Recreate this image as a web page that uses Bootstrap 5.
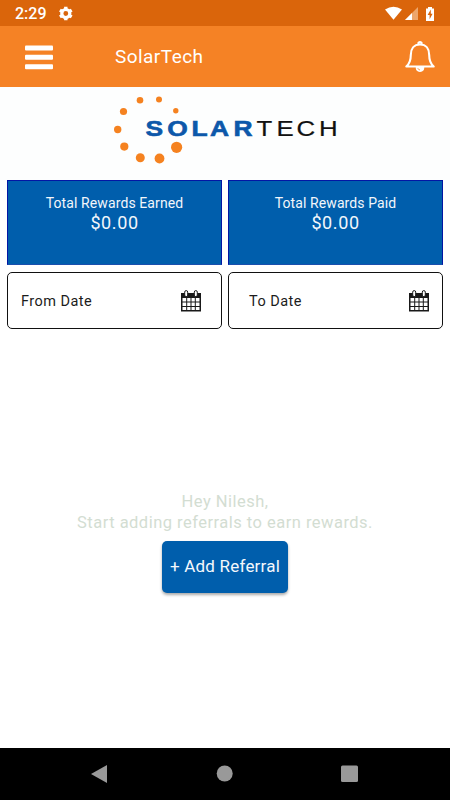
<!DOCTYPE html>
<html lang="en">
<head>
<meta charset="utf-8">
<meta name="viewport" content="width=device-width, initial-scale=1">
<title>SolarTech</title>
<link href="https://cdn.jsdelivr.net/npm/bootstrap@5.3.0/dist/css/bootstrap.min.css" rel="stylesheet">
<style>
body{font-family:Roboto,Inter,sans-serif;background:#fff;height:800px;overflow:hidden}
svg{display:block;flex:none}
.status{height:26px;background:#da650b;font:500 16px/26px Roboto,sans-serif;padding:1px 15px 0 15px}
.appbar{height:61px;background:#f58225;padding:0 15px 0 24px}
.title{font-size:19px;letter-spacing:.45px;margin-left:61px;padding-top:2px}
.logo{height:93px;background:#fdfefe}
.panels{padding:0 7px;gap:6px}
.total{height:85px;background:#005eac;border:1px solid #0216a4;border-bottom-color:#1a4fae;padding-top:12px;line-height:20px;color:#f2f6fb}
.total small{font-size:14px;letter-spacing:.1px;line-height:20px}
.total span{font-size:18px;letter-spacing:.6px;line-height:20px}
.dates{margin-top:7px}
.date{height:57px;border:1px solid #111;border-radius:5px;font-size:14.5px;color:#1c1c1c;letter-spacing:.45px;padding:2px 13px 0}
.date svg{margin-top:-2px}
.from svg{margin-right:7px}
.to{text-indent:7px}
.empty{color:#d3ddd2;font-size:16.5px;line-height:21px;letter-spacing:.48px;margin-top:162px}
.add{width:126px;height:52px;background:#005eac;border-radius:5px;font-size:17px;letter-spacing:.2px;box-shadow:0 2px 3px #0005;margin-top:8px;white-space:nowrap}
.add,.add:hover{color:#f4f8fc}
.sysnav{height:52px;background:#000}
</style>
<script src="https://cdn.jsdelivr.net/npm/bootstrap@5.3.0/dist/js/bootstrap.bundle.min.js"></script>
</head>
<body class="d-flex flex-column">
<div class="status d-flex align-items-center text-white">
  <span>2:29</span>
  <svg class="ms-2" width="20" height="18" viewBox="0 0 20 18"><g fill="none" stroke="#fff" transform="translate(10.800 8.500)"><circle r="4" stroke-width="3.2"/><path stroke-width="3.4" d="M0-6.8v2.3M0 6.8v-2.3M5.9-3.4l-2 1.15M-5.9-3.4l2 1.15M5.9 3.4l-2-1.15M-5.9 3.4l2-1.15"/></g></svg>
  <svg class="ms-auto" width="51" height="18" viewBox="384 4 51 18"><path d="M385 8.500Q393.500 3 402 8.500L393.500 18.800Z" fill="#fff"/><path d="M418 6v13h-13z" fill="#eda66b"/><path d="M412 12v7h-7z" fill="#fff"/><path d="M428 6h4v1.500h2V20h-8V7.500h2z" fill="#fff"/><path d="M430.800 8.500l-3.200 5.500h2v4.300l3-5.500h-1.800z" fill="#da650b"/></svg>
</div>
<nav class="appbar d-flex align-items-center text-white">
  <svg width="30" height="26" viewBox="0 0 30 26" fill="#fff"><rect x="1" y="1.500" width="28" height="5" rx="1"/><rect x="1" y="10.800" width="28" height="5" rx="1"/><rect x="1" y="20.200" width="28" height="5" rx="1"/></svg>
  <span class="title">SolarTech</span>
  <svg class="ms-auto" width="30" height="34" viewBox="405 40 30 34" fill="none" stroke="#fff" stroke-width="2.100" stroke-linejoin="round"><path d="M406.300 66.500c3.500-3 4.500-6 4.500-11.500 0-6 3-10.500 9.200-10.500s9.200 4.500 9.200 10.500c0 5.500 1 8.500 4.500 11.500z"/><path d="M418.500 44v-1.200q1.500-1.500 3 0V44"/><path d="M416 67.500a4 4 0 0 0 8 0z" fill="#fff" stroke-width="1"/><path d="M417.800 68.200q.5 1.500 2.200 1.800" stroke="#f58225" stroke-width=".8"/></svg>
</nav>
<div class="logo">
  <svg width="450" height="93" viewBox="0 87 450 93">
    <g fill="#f58220"><circle cx="140" cy="100.300" r="3.300"/><circle cx="159" cy="99.600" r="3"/><circle cx="175.800" cy="110.700" r="2.700"/><circle cx="123.500" cy="111.500" r="3.600"/><circle cx="117.700" cy="129.500" r="3.700"/><circle cx="124.300" cy="146.600" r="4.100"/><circle cx="140.300" cy="157.700" r="4.500"/><circle cx="159.500" cy="158.500" r="4.900"/><circle cx="176.600" cy="147.300" r="5.600"/></g>
    <g transform="scale(1.200 1)" font-family="Liberation Sans, sans-serif" font-size="22">
      <text y="135.800" font-weight="700" fill="#0d58aa" stroke="#0d58aa" stroke-width=".6" x="121.200 139.400 159.600 175 194.600">SOLAR</text>
      <text y="136" font-size="21.500" fill="#111" stroke="#111" stroke-width=".2" x="213.800 230.500 247 265.800">TECH</text>
    </g>
  </svg>
</div>
<div class="panels d-flex">
  <div class="total col d-flex flex-column align-items-center"><small>Total Rewards Earned</small><span>$0.00</span></div>
  <div class="total col d-flex flex-column align-items-center"><small>Total Rewards Paid</small><span>$0.00</span></div>
</div>
<svg class="d-none"><symbol id="cal" viewBox="0 0 20 22"><path d="M0 3h20v18.500H0z" fill="#191919"/><g fill="#fff"><path d="M1.500 8h3.700v3.500H1.500zM6.200 8h3.300v3.500H6.200zM10.500 8h3.300v3.500h-3.300zM14.800 8h3.700v3.500h-3.700zM1.500 12.500h3.700V16H1.500zM6.200 12.500h3.300V16H6.200zM10.500 12.500h3.300V16h-3.300zM14.800 12.500h3.700V16h-3.700zM1.500 17h3.700v3H1.500zM6.200 17h3.300v3H6.200zM10.500 17h3.300v3h-3.300zM14.800 17h3.700v3h-3.700z"/></g><g fill="#fff" stroke="#191919"><rect x="3.700" y=".6" width="3" height="6" rx="1.500"/><rect x="13.300" y=".6" width="3" height="6" rx="1.500"/></g></symbol></svg>
<div class="panels dates d-flex">
  <div class="date from col d-flex align-items-center justify-content-between">From Date<svg width="20" height="22"><use href="#cal"/></svg></div>
  <div class="date to col d-flex align-items-center justify-content-between">To Date<svg width="20" height="22"><use href="#cal"/></svg></div>
</div>
<main class="d-flex flex-column align-items-center text-center">
  <div class="empty">Hey Nilesh,<br>Start adding referrals to earn rewards.</div>
  <button class="add btn border-0 p-0">+ Add Referral</button>
</main>
<footer class="sysnav mt-auto">
  <svg width="450" height="52" viewBox="0 748 450 52" fill="#999"><path d="M107 765v18l-16-9z"/><circle cx="224.700" cy="773.500" r="8"/><rect x="341" y="765.500" width="17" height="16.500" rx="1.500"/></svg>
</footer>
</body>
</html>
